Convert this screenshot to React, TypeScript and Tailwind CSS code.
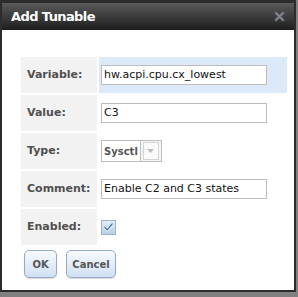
const rows = [
  { label: "Variable:", value: "hw.acpi.cpu.cx_lowest", kind: "text", active: true },
  { label: "Value:", value: "C3", kind: "text" },
  { label: "Type:", value: "Sysctl", kind: "select" },
  { label: "Comment:", value: "Enable C2 and C3 states", kind: "text" },
  { label: "Enabled:", value: "", kind: "check" },
];

const buttons = [
  { text: "OK", cls: "w-[33px]" },
  { text: "Cancel", cls: "w-[50px]" },
];

function CloseIcon() {
  return (
    <svg width="11" height="11" viewBox="0 0 11 11">
      <path d="M2 2 L9 9 M9 2 L2 9" stroke="#5f636b" strokeWidth="3" strokeLinecap="round" />
      <path d="M2 2 L9 9 M9 2 L2 9" stroke="#8a8e96" strokeWidth="1.2" strokeLinecap="round" />
    </svg>
  );
}

function Field({ kind, value }: { kind: string; value: string }) {
  if (kind === "select") {
    return (
      <div className="flex h-[22px]">
        <div className="flex items-center border border-[#bdbdbd] bg-white px-[2px] text-[10px] font-bold text-[#555]">
          {value}
        </div>
        <div className="flex w-[21px] items-center justify-center border border-l-0 border-[#bdbdbd] bg-[#f4f4f4]">
          <div className="flex h-[18px] w-[16px] items-center justify-center border border-[#d4d4d4] bg-[#fafafa]">
            <svg width="7" height="4" viewBox="0 0 7 4">
              <path d="M0 0 L7 0 L3.5 4 Z" fill="#b8bcc4" />
            </svg>
          </div>
        </div>
      </div>
    );
  }
  if (kind === "check") {
    return (
      <div className="flex h-[15px] w-[15px] items-center justify-center border border-[#9fb2c8] bg-gradient-to-b from-[#e3edf8] to-[#b9cfe8]">
        <svg width="11" height="10" viewBox="0 0 11 10">
          <path d="M1.5 5 L4.2 7.8 L9.5 1.5" stroke="#ffffff" strokeWidth="2.6" fill="none" />
          <path d="M1.5 5 L4.2 7.8 L9.5 1.5" stroke="#3d6fb0" strokeWidth="1.3" fill="none" />
        </svg>
      </div>
    );
  }
  return (
    <div className="flex h-[20px] w-[166px] items-center border border-[#bdbdbd] bg-white pl-[2px] text-[11px] text-[#111]">
      {value}
    </div>
  );
}

export default function App() {
  return (
    <div className="h-[297px] w-[298px] bg-[#808080] font-['DejaVu_Sans',sans-serif]">
      <div className="flex h-[292px] w-[296px] flex-col bg-[#2c2c2c] px-[2px] pb-[2px] pt-[3px]">
        <div className="flex h-[27px] items-center justify-between bg-gradient-to-b from-[#5a5a5a] via-[#3c3c3c] to-[#1e1e1e] pl-[9px] pr-[9px]">
          <span className="text-[13px] font-bold tracking-[-0.6px] text-white">Add Tunable</span>
          <CloseIcon />
        </div>
        <div className="flex flex-1 flex-col bg-white pl-[19px] pt-[27px]">
          <div className="flex w-[266px] flex-col gap-[2px]">
            {rows.map((r) => (
              <div key={r.label} className="flex h-[36px] gap-[2px]">
                <div className="flex w-[76px] items-center bg-[#f2f2f2] pl-[6px] text-[11px] font-bold text-[#505050]">
                  {r.label}
                </div>
                <div className={`flex flex-1 items-center pl-[2px] ${r.active ? "bg-[#dce9f8]" : "bg-white"}`}>
                  <Field kind={r.kind} value={r.value} />
                </div>
              </div>
            ))}
          </div>
          <div className="mt-[5px] flex gap-[9px] pl-[3px]">
            {buttons.map((b) => (
              <div
                key={b.text}
                className={`flex h-[28px] items-center justify-center rounded-[5px] border border-[#93a9c4] bg-gradient-to-b from-[#f7fafd] to-[#cfe0f3] text-[10px] font-bold text-[#555] shadow-[0_1px_1px_rgba(0,0,0,0.15)] ${b.cls}`}
              >
                {b.text}
              </div>
            ))}
          </div>
        </div>
      </div>
    </div>
  );
}
